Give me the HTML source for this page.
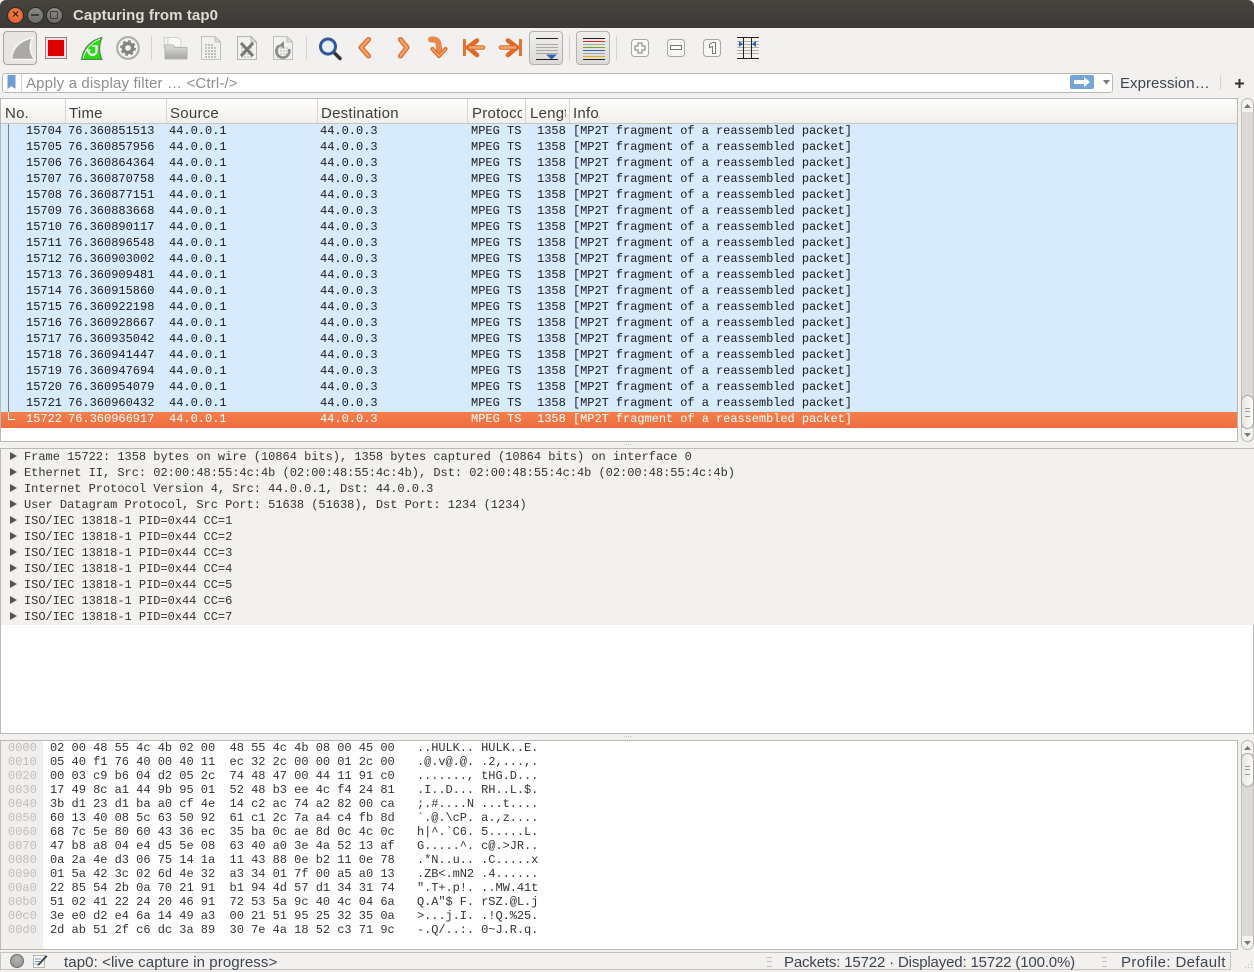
<!DOCTYPE html>
<html>
<head>
<meta charset="utf-8">
<style>
html,body{margin:0;padding:0;width:1254px;height:972px;overflow:hidden;background:#f2f1f0}
body{position:relative;font-family:"Liberation Sans",sans-serif;color:#3c3c3c}
.a{position:absolute}
pre{position:absolute;margin:0;font:12px/16px "Liberation Mono",monospace;color:#1a1a1a;z-index:3}
.sel{color:#fff}
.h{position:absolute;top:99px;height:24px;line-height:29px;font-size:15px;letter-spacing:.25px;color:#3c3c3c;border-left:1px solid #d8d5d0;overflow:hidden;box-sizing:border-box;white-space:nowrap}
.sep{position:absolute;top:36px;width:1px;height:24px;background:#d6d3ce}
.btn{position:absolute;top:31px;box-sizing:border-box;border:1px solid #b5b2ac;border-radius:4px;background:linear-gradient(#f0efed,#dcdad6)}
svg{position:absolute;overflow:visible}
.sb{position:absolute;left:1241px;width:13px;box-sizing:border-box;background:#dcdad6;border:1px solid #c0bdb8;border-radius:7px}
.cap{position:absolute;left:1241px;width:13px;box-sizing:border-box;background:#f4f3f1;border:1px solid #c0bdb8}
.th{position:absolute;left:1241px;width:13px;box-sizing:border-box;background:linear-gradient(90deg,#e8e6e3,#fbfbfa);border:1px solid #aaa7a2;border-radius:7px}
</style>
</head>
<body>
<!-- title bar -->
<div class="a" style="left:0;top:0;width:1254px;height:28px;background:linear-gradient(#45443f,#3b3a36);border-radius:6px 6px 0 0"></div>
<div class="a" style="left:7px;top:7px;width:15px;height:15px;border-radius:50%;background:radial-gradient(circle at 50% 40%,#f08a55,#de4d22);border:1px solid #2c2b28"></div>
<div class="a" style="left:7px;top:6px;width:17px;height:17px;line-height:17px;text-align:center;font-size:12px;font-weight:bold;color:#4a2010">×</div>
<div class="a" style="left:27px;top:7px;width:15px;height:15px;border-radius:50%;background:linear-gradient(#8c8a84,#6c6a65);border:1px solid #2c2b28"></div>
<div class="a" style="left:31px;top:14px;width:8px;height:2px;background:#3c3b37"></div>
<div class="a" style="left:46px;top:7px;width:15px;height:15px;border-radius:50%;background:linear-gradient(#8c8a84,#6c6a65);border:1px solid #2c2b28"></div>
<div class="a" style="left:50px;top:11px;width:6px;height:6px;border:1px solid #3c3b37;border-radius:1px"></div>
<div class="a" style="left:73px;top:6px;font-size:15px;line-height:19px;font-weight:bold;color:#dfdbd2;letter-spacing:.09px;white-space:nowrap">Capturing from tap0</div>

<!-- toolbar -->
<svg width="0" height="0" style="left:0;top:0"><defs>
<linearGradient id="fold" x1="0" y1="0" x2="0" y2="1"><stop offset="0" stop-color="#dededc"/><stop offset="1" stop-color="#a6a6a4"/></linearGradient>
<linearGradient id="or" x1="0" y1="0" x2="0" y2="1"><stop offset="0" stop-color="#f6b27a"/><stop offset="1" stop-color="#ec7a35"/></linearGradient>
</defs></svg>
<div class="btn" style="left:3px;width:34px;height:34px;border-color:#a9a6a0;background:#e8e6e3"></div>
<svg style="left:0;top:28px" width="40" height="40"><path d="M11.500 31.500 C12 21 18 13 33 9.500 C29 16 29 25 35 31.500 Z" fill="#aaa9a6" stroke="#f6f6f4" stroke-width="1.500"/></svg>
<div class="a" style="left:45px;top:37px;width:22px;height:22px;box-sizing:border-box;background:#f3dcdc;border:1px solid #8c8c8c"></div>
<div class="a" style="left:48px;top:40px;width:16px;height:16px;background:#e00000"></div>
<svg style="left:80px;top:36px" width="26" height="26"><path d="M1.500 23.500 C3 12 11 4 22 1.500 C19 9 19 17 22 23.500 Z" fill="#27dc10" stroke="#55824c" stroke-width="1"/><path d="M3.200 22.700 C5 13 12 6 20 3.200" fill="none" stroke="#e6f5e0" stroke-width="1"/><path d="M16.500 11 V15 A4 4 0 1 1 8.500 15 " fill="none" stroke="#fff" stroke-width="2.200"/><path d="M6 13.500 L8.500 17 L11 13.500Z" fill="#fff"/><path d="M12 10 H17 V13" fill="none" stroke="#fff" stroke-width="1.500"/></svg>
<svg style="left:116px;top:36px" width="24" height="24"><circle cx="12" cy="12" r="10.800" fill="#f4f4f3" stroke="#aeaeac" stroke-width="2.200"/><circle cx="12" cy="12" r="4.600" fill="none" stroke="#828280" stroke-width="3.400"/><circle cx="12" cy="12" r="7" fill="none" stroke="#828280" stroke-width="1.800" stroke-dasharray="2.600 2.900"/></svg>
<div class="sep" style="left:151px"></div>
<svg style="left:163px;top:36px" width="25" height="24"><path d="M1 1.500 H11 L13 4 V12 H1Z" fill="#f3f3f2" stroke="#d2d2d0"/><path d="M5 1.500 H15 L18 4.500 V11 H5Z" fill="#f9f9f8" stroke="#d2d2d0"/><path d="M2 9 H10 L12 11.500 H24 V23 H2Z" fill="url(#fold)" stroke="#b5b5b3"/></svg>
<svg style="left:201px;top:36px" width="20" height="24"><path d="M.5 .500 H14 L19.500 6 V23.500 H.5Z" fill="#f1f1f0" stroke="#c0c0be"/><path d="M14 .500 V6 H19.500Z" fill="#dcdcda" stroke="#c0c0be"/><path d="M4 12 H16 M4 15 H16 M4 18 H16 M4 21 H16 M4 9 H13" stroke="#b0b0ae" stroke-width="1.600" stroke-dasharray="2 1"/></svg>
<svg style="left:237px;top:36px" width="20" height="24"><path d="M.5 .500 H14 L19.500 6 V23.500 H.5Z" fill="#f1f1f0" stroke="#b5b5b3"/><path d="M14 .500 V6 H19.500Z" fill="#dcdcda" stroke="#b5b5b3"/><path d="M4 12 H16 M4 15 H16 M4 18 H16 M4 21 H16" stroke="#c4c4c2" stroke-width="1.600" stroke-dasharray="2 1"/><path d="M4 7 L16 20 M16 7 L4 20" stroke="#777775" stroke-width="3"/></svg>
<svg style="left:273px;top:36px" width="20" height="24"><path d="M.5 .500 H14 L19.500 6 V23.500 H.5Z" fill="#f1f1f0" stroke="#c0c0be"/><path d="M14 .500 V6 H19.500Z" fill="#dcdcda" stroke="#c0c0be"/><path d="M4 12 H16 M4 15 H16 M4 18 H16 M4 21 H16" stroke="#c8c8c6" stroke-width="1.600" stroke-dasharray="2 1"/><path d="M6.500 9.500 A6.500 6.500 0 1 0 16 13" fill="none" stroke="#8a8a88" stroke-width="2.600"/><path d="M11 5 L6 9.500 L11 12.500Z" fill="#8a8a88"/></svg>
<div class="sep" style="left:306px"></div>
<svg style="left:318px;top:36px" width="24" height="24"><path d="M15.500 16 L22 22.500" stroke="#333" stroke-width="3.500" stroke-linecap="round"/><circle cx="10" cy="10.500" r="7.500" fill="#e8eef5" stroke="#2f5596" stroke-width="3"/></svg>
<!-- go icons -->
<svg style="left:345px;top:28px" width="190" height="42">
<g fill="none" stroke="#dd6a2a" stroke-linecap="round" stroke-linejoin="round">
<path d="M23.500 11.500 L16 19.500 L23.500 28" stroke-width="5"/>
<path d="M55.500 11.500 L62 19.500 L55.500 28" stroke-width="5"/>
<path d="M86 11.500 H88.500 C92.500 11.500 94 14 94 22" stroke-width="6" stroke="#ea8a4a"/>
<path d="M87.500 21 L94 28 L100.500 21" stroke-width="4"/>
<path d="M132 12.500 L123 19.500 L132 27 M125 19.500 H138" stroke-width="4.600"/>
<path d="M163 12.500 L172 19.500 L163 27 M170 19.500 H156" stroke-width="4.600"/>
</g>
<g fill="none" stroke="#f3a66c" stroke-linecap="round" stroke-linejoin="round">
<path d="M23.500 11.500 L16 19.500 L23.500 28" stroke-width="2.400"/>
<path d="M55.500 11.500 L62 19.500 L55.500 28" stroke-width="2.400"/>
<path d="M87.500 21 L94 28 L100.500 21" stroke-width="1.600"/>
<path d="M125 19.500 H138" stroke-width="2.400"/>
<path d="M170 19.500 H156" stroke-width="2.400"/>
</g>
<path d="M118 11 H121 V28 H118Z M174 11 H177 V28 H174Z" fill="#e8752f"/>
</svg>
<div class="btn" style="left:529px;width:34px;height:34px"></div>
<svg style="left:529px;top:31px" width="34" height="34"><path d="M7 7.500 H29" stroke="#222"/><path d="M7 13.500 H29 M7 16.500 H29 M7 19.500 H29 M7 22.500 H29" stroke="#a8a8a6"/><path d="M7 28.500 H29" stroke="#222"/><path d="M17 23.500 H28 L22.500 28.500Z" fill="#2f64b4"/></svg>
<div class="sep" style="left:569px"></div>
<div class="btn" style="left:576px;width:34px;height:34px"></div>
<div class="a" style="left:583px;top:38px;width:22px;height:1px;background:#222"></div>
<div class="a" style="left:583px;top:41px;width:22px;height:1px;background:#d42a2a"></div>
<div class="a" style="left:583px;top:44px;width:22px;height:1px;background:#a8a8a6"></div>
<div class="a" style="left:583px;top:47px;width:22px;height:1px;background:#6eab2e"></div>
<div class="a" style="left:583px;top:50px;width:22px;height:1px;background:#2f64b4"></div>
<div class="a" style="left:583px;top:53px;width:22px;height:1px;background:#a8a8a6"></div>
<div class="a" style="left:583px;top:56px;width:22px;height:1px;background:#d8b400"></div>
<div class="a" style="left:583px;top:59px;width:22px;height:1px;background:#222"></div>
<div class="sep" style="left:616px"></div>
<svg style="left:631px;top:39px" width="18" height="18"><rect x=".5" y=".5" width="17" height="17" rx="3" fill="#f7f7f6" stroke="#a8a6a2"/><path d="M7 4 H11 V7 H14 V11 H11 V14 H7 V11 H4 V7 H7Z" fill="#fff" stroke="#777"/></svg>
<svg style="left:667px;top:39px" width="18" height="18"><rect x=".5" y=".5" width="17" height="17" rx="3" fill="#f7f7f6" stroke="#a8a6a2"/><rect x="3.500" y="6.500" width="11" height="4" fill="#fff" stroke="#777"/></svg>
<svg style="left:703px;top:39px" width="18" height="18"><rect x=".5" y=".5" width="17" height="17" rx="3" fill="#f7f7f6" stroke="#a8a6a2"/><path d="M6.500 5.500 L9.500 3.500 H12.500 V14.500 H9.500 V7.500 L6.500 8.500Z" fill="#fff" stroke="#777"/></svg>
<svg style="left:737px;top:37px" width="22" height="22"><path d="M0 .5 H22 M0 21.500 H22" stroke="#222"/><path d="M0 4.500 H22 M0 7.500 H22 M0 10.500 H22 M0 13.500 H22 M0 16.500 H22" stroke="#b0b0ae"/><path d="M6.500 0 V22 M14.500 0 V22" stroke="#222"/><path d="M2 4 L6 7 L2 10Z M19 4 L15 7 L19 10Z" fill="#2f64b4"/></svg>

<!-- filter bar -->
<div class="a" style="left:2px;top:73px;width:1109px;height:18px;background:#fff;border:1px solid #bab7b2;border-radius:3px"></div>
<svg style="left:7px;top:75px" width="9" height="14"><path d="M.5 0 H8.500 V14 L4.500 11 L.5 14Z" fill="#6f9bd2"/></svg>
<div class="a" style="left:21px;top:74px;width:1px;height:18px;background:#d5d3cf"></div>
<div class="a" style="left:26px;top:74px;font-size:15px;line-height:20px;color:#8e8e8e;white-space:nowrap;letter-spacing:.15px">Apply a display filter … &lt;Ctrl-/&gt;</div>
<div class="a" style="left:1070px;top:75px;width:24px;height:14px;background:#76a3d8;border-radius:2px"></div>
<svg style="left:1073px;top:76px" width="18" height="12"><path d="M1 4 H11 V1 L17 6 L11 11 V8 H1Z" fill="#fff"/></svg>
<svg style="left:1102px;top:80px" width="9" height="5"><path d="M1 0 H8 L4.500 4.500Z" fill="#777"/></svg>
<div class="a" style="left:1120px;top:74px;font-size:15px;line-height:20px;color:#3c4450;white-space:nowrap;letter-spacing:.05px">Expression…</div>
<div class="a" style="left:1220px;top:75px;width:1px;height:15px;background:#d6d3ce"></div>
<svg style="left:1235px;top:79px" width="9" height="9"><path d="M4.500 0 V9 M0 4.500 H9" stroke="#333" stroke-width="2"/></svg>

<!-- packet list -->
<div class="a" style="left:0;top:98px;width:1238px;height:344px;box-sizing:border-box;background:#fff;border:1px solid #bcb9b4"></div>
<div class="a" style="left:1px;top:99px;width:1236px;height:25px;box-sizing:border-box;background:linear-gradient(#fff,#f0efed);border-bottom:1px solid #c8c5c0"></div>
<div class="h" style="left:0;width:65px;border:0;padding-left:5px">No.</div>
<div class="h" style="left:65px;width:101px;padding-left:3px">Time</div>
<div class="h" style="left:166px;width:151px;padding-left:3px">Source</div>
<div class="h" style="left:317px;width:150px;padding-left:3px">Destination</div>
<div class="h" style="left:467px;width:58px;padding-left:4px;clip-path:inset(0 3px 0 0)">Protocol</div>
<div class="h" style="left:525px;width:44px;padding-left:4px;clip-path:inset(0 3px 0 0)">Length</div>
<div class="h" style="left:569px;width:300px;padding-left:3px">Info</div>
<div class="a" style="left:1px;top:124px;width:1236px;height:288px;background:#d8ebfd"></div>
<div class="a" style="left:1px;top:412px;width:1236px;height:16px;background:linear-gradient(#f47f4c,#ec6d3e)"></div>
<div class="a" style="left:8px;top:124px;width:1px;height:288px;background:#7d7d7d"></div>
<div class="a" style="left:8px;top:412px;width:7px;height:8px;box-sizing:border-box;border-left:1px solid #fff;border-bottom:1px solid #fff;z-index:4"></div>

<pre style="left:26px;top:123px">15704
15705
15706
15707
15708
15709
15710
15711
15712
15713
15714
15715
15716
15717
15718
15719
15720
15721
<span class="sel">15722</span></pre>
<pre style="left:68px;top:123px">76.360851513
76.360857956
76.360864364
76.360870758
76.360877151
76.360883668
76.360890117
76.360896548
76.360903002
76.360909481
76.360915860
76.360922198
76.360928667
76.360935042
76.360941447
76.360947694
76.360954079
76.360960432
<span class="sel">76.360966917</span></pre>
<pre style="left:169px;top:123px">44.0.0.1
44.0.0.1
44.0.0.1
44.0.0.1
44.0.0.1
44.0.0.1
44.0.0.1
44.0.0.1
44.0.0.1
44.0.0.1
44.0.0.1
44.0.0.1
44.0.0.1
44.0.0.1
44.0.0.1
44.0.0.1
44.0.0.1
44.0.0.1
<span class="sel">44.0.0.1</span></pre>
<pre style="left:320px;top:123px">44.0.0.3
44.0.0.3
44.0.0.3
44.0.0.3
44.0.0.3
44.0.0.3
44.0.0.3
44.0.0.3
44.0.0.3
44.0.0.3
44.0.0.3
44.0.0.3
44.0.0.3
44.0.0.3
44.0.0.3
44.0.0.3
44.0.0.3
44.0.0.3
<span class="sel">44.0.0.3</span></pre>
<pre style="left:471px;top:123px">MPEG TS
MPEG TS
MPEG TS
MPEG TS
MPEG TS
MPEG TS
MPEG TS
MPEG TS
MPEG TS
MPEG TS
MPEG TS
MPEG TS
MPEG TS
MPEG TS
MPEG TS
MPEG TS
MPEG TS
MPEG TS
<span class="sel">MPEG TS</span></pre>
<pre style="left:537px;top:123px">1358
1358
1358
1358
1358
1358
1358
1358
1358
1358
1358
1358
1358
1358
1358
1358
1358
1358
<span class="sel">1358</span></pre>
<pre style="left:573px;top:123px;letter-spacing:-.05px">[MP2T fragment of a reassembled packet]
[MP2T fragment of a reassembled packet]
[MP2T fragment of a reassembled packet]
[MP2T fragment of a reassembled packet]
[MP2T fragment of a reassembled packet]
[MP2T fragment of a reassembled packet]
[MP2T fragment of a reassembled packet]
[MP2T fragment of a reassembled packet]
[MP2T fragment of a reassembled packet]
[MP2T fragment of a reassembled packet]
[MP2T fragment of a reassembled packet]
[MP2T fragment of a reassembled packet]
[MP2T fragment of a reassembled packet]
[MP2T fragment of a reassembled packet]
[MP2T fragment of a reassembled packet]
[MP2T fragment of a reassembled packet]
[MP2T fragment of a reassembled packet]
[MP2T fragment of a reassembled packet]
<span class="sel">[MP2T fragment of a reassembled packet]</span></pre>

<!-- packet scrollbar -->
<div class="sb" style="top:98px;height:344px"></div>
<div class="cap" style="top:98px;height:14px;border-radius:7px 7px 0 0;border-bottom:0"></div>
<svg style="left:1244px;top:104px" width="7" height="4"><path d="M0 4 H7 L3.500 0Z" fill="#777"/></svg>
<div class="cap" style="top:428px;height:14px;border-radius:0 0 7px 7px;border-top:0"></div>
<div class="th" style="top:395px;height:34px"></div>
<div class="a" style="left:1245px;top:408px;width:5px;height:7px;border-top:1px solid #999;border-bottom:1px solid #999"></div>
<div class="a" style="left:1245px;top:411px;width:5px;height:1px;background:#999"></div>
<svg style="left:1244px;top:433px" width="7" height="4"><path d="M0 0 H7 L3.500 4Z" fill="#777"/></svg>
<svg style="left:624px;top:444px" width="7" height="2"><path d="M0 0h1v1H0z M2 0h1v1H2z M4 0h1v1H4z M6 0h1v1H6z" fill="#c4c2bd"/></svg>

<!-- details pane -->
<div class="a" style="left:0;top:448px;width:1254px;height:286px;box-sizing:border-box;background:#fff;border:1px solid #bcb9b4"></div>
<div class="a" style="left:1px;top:449px;width:1253px;height:176px;background:#f2f1ef"></div>
<svg style="left:10px;top:452px" width="8" height="168"><path d="M0 0 L7 4 L0 8Z M0 16 L7 20 L0 24Z M0 32 L7 36 L0 40Z M0 48 L7 52 L0 56Z M0 64 L7 68 L0 72Z M0 80 L7 84 L0 88Z M0 96 L7 100 L0 104Z M0 112 L7 116 L0 120Z M0 128 L7 132 L0 136Z M0 144 L7 148 L0 152Z M0 160 L7 164 L0 168Z" fill="#555"/></svg>
<pre style="left:24px;top:449px;color:#333;letter-spacing:-.02px">Frame 15722: 1358 bytes on wire (10864 bits), 1358 bytes captured (10864 bits) on interface 0
Ethernet II, Src: 02:00:48:55:4c:4b (02:00:48:55:4c:4b), Dst: 02:00:48:55:4c:4b (02:00:48:55:4c:4b)
Internet Protocol Version 4, Src: 44.0.0.1, Dst: 44.0.0.3
User Datagram Protocol, Src Port: 51638 (51638), Dst Port: 1234 (1234)
ISO/IEC 13818-1 PID=0x44 CC=1
ISO/IEC 13818-1 PID=0x44 CC=2
ISO/IEC 13818-1 PID=0x44 CC=3
ISO/IEC 13818-1 PID=0x44 CC=4
ISO/IEC 13818-1 PID=0x44 CC=5
ISO/IEC 13818-1 PID=0x44 CC=6
ISO/IEC 13818-1 PID=0x44 CC=7</pre>
<svg style="left:624px;top:736px" width="7" height="2"><path d="M0 0h1v1H0z M2 0h1v1H2z M4 0h1v1H4z M6 0h1v1H6z" fill="#c4c2bd"/></svg>

<!-- hex pane -->
<div class="a" style="left:0;top:740px;width:1238px;height:210px;box-sizing:border-box;background:#fff;border:1px solid #bcb9b4"></div>
<div class="a" style="left:1px;top:741px;width:42px;height:208px;background:#f0efed"></div>
<pre style="left:8px;top:741px;line-height:14px;color:#bdbdbd">0000
0010
0020
0030
0040
0050
0060
0070
0080
0090
00a0
00b0
00c0
00d0</pre>
<pre style="left:50px;top:741px;line-height:14px;color:#333;letter-spacing:-.02px">02 00 48 55 4c 4b 02 00  48 55 4c 4b 08 00 45 00
05 40 f1 76 40 00 40 11  ec 32 2c 00 00 01 2c 00
00 03 c9 b6 04 d2 05 2c  74 48 47 00 44 11 91 c0
17 49 8c a1 44 9b 95 01  52 48 b3 ee 4c f4 24 81
3b d1 23 d1 ba a0 cf 4e  14 c2 ac 74 a2 82 00 ca
60 13 40 08 5c 63 50 92  61 c1 2c 7a a4 c4 fb 8d
68 7c 5e 80 60 43 36 ec  35 ba 0c ae 8d 0c 4c 0c
47 b8 a8 04 e4 d5 5e 08  63 40 a0 3e 4a 52 13 af
0a 2a 4e d3 06 75 14 1a  11 43 88 0e b2 11 0e 78
01 5a 42 3c 02 6d 4e 32  a3 34 01 7f 00 a5 a0 13
22 85 54 2b 0a 70 21 91  b1 94 4d 57 d1 34 31 74
51 02 41 22 24 20 46 91  72 53 5a 9c 40 4c 04 6a
3e e0 d2 e4 6a 14 49 a3  00 21 51 95 25 32 35 0a
2d ab 51 2f c6 dc 3a 89  30 7e 4a 18 52 c3 71 9c</pre>
<pre style="left:417px;top:741px;line-height:14px;color:#333;letter-spacing:-.07px">..HULK.. HULK..E.
.@.v@.@. .2,...,.
......., tHG.D...
.I..D... RH..L.$.
;.#....N ...t....
`.@.\cP. a.,z....
h|^.`C6. 5.....L.
G.....^. c@.&gt;JR..
.*N..u.. .C.....x
.ZB&lt;.mN2 .4......
".T+.p!. ..MW.41t
Q.A"$ F. rSZ.@L.j
&gt;...j.I. .!Q.%25.
-.Q/..:. 0~J.R.q.</pre>

<!-- hex scrollbar -->
<div class="sb" style="top:740px;height:210px"></div>
<div class="cap" style="top:740px;height:14px;border-radius:7px 7px 0 0;border-bottom:0"></div>
<svg style="left:1244px;top:746px" width="7" height="4"><path d="M0 4 H7 L3.500 0Z" fill="#777"/></svg>
<div class="cap" style="top:936px;height:14px;border-radius:0 0 7px 7px;border-top:0"></div>
<div class="th" style="top:753px;height:34px"></div>
<div class="a" style="left:1245px;top:766px;width:5px;height:7px;border-top:1px solid #999;border-bottom:1px solid #999"></div>
<div class="a" style="left:1245px;top:769px;width:5px;height:1px;background:#999"></div>
<svg style="left:1244px;top:941px" width="7" height="4"><path d="M0 0 H7 L3.500 4Z" fill="#777"/></svg>

<!-- status bar -->
<div class="a" style="left:0;top:952px;width:1231px;height:18px;box-sizing:border-box;border:1px solid #c6c3be"></div>
<div class="a" style="left:10px;top:954px;width:14px;height:14px;box-sizing:border-box;border-radius:50%;background:radial-gradient(circle at 50% 35%,#b5b5b3,#8e8e8c);border:1px solid #6e6e6c"></div>
<svg style="left:33px;top:953px" width="15" height="15"><rect x=".5" y="2.500" width="11" height="12" fill="#f6f6f4" stroke="#b5b5b3"/><path d="M2 6 H8 M2 8.500 H7 M2 11 H6" stroke="#6f9bd2"/><path d="M5 11 L13 2 L14.500 3.500 L6.500 12 L4.500 13Z" fill="#444"/></svg>
<div class="a" style="left:64px;top:953px;font-size:15px;line-height:20px;color:#3c4450;white-space:nowrap;letter-spacing:.1px">tap0: &lt;live capture in progress&gt;</div>
<div class="a" style="left:767px;top:957px;width:5px;height:8px;border-top:1px solid #c0c0be;border-bottom:1px solid #c0c0be"></div>
<div class="a" style="left:767px;top:961px;width:5px;height:1px;background:#c0c0be"></div>
<div class="a" style="left:784px;top:953px;font-size:15px;line-height:20px;color:#3c4450;white-space:nowrap;letter-spacing:-.16px">Packets: 15722 · Displayed: 15722 (100.0%)</div>
<div class="a" style="left:1102px;top:957px;width:5px;height:8px;border-top:1px solid #c0c0be;border-bottom:1px solid #c0c0be"></div>
<div class="a" style="left:1102px;top:961px;width:5px;height:1px;background:#c0c0be"></div>
<div class="a" style="left:1121px;top:953px;font-size:15px;line-height:20px;color:#3c4450;white-space:nowrap;letter-spacing:.4px">Profile: Default</div>
<svg style="left:1243px;top:960px" width="10" height="10"><path d="M8 1h1v1H8z M5 4h1v1H5z M8 4h1v1H8z M2 7h1v1H2z M5 7h1v1H5z M8 7h1v1H8z" fill="#c2c0bb"/></svg>
</body>
</html>
